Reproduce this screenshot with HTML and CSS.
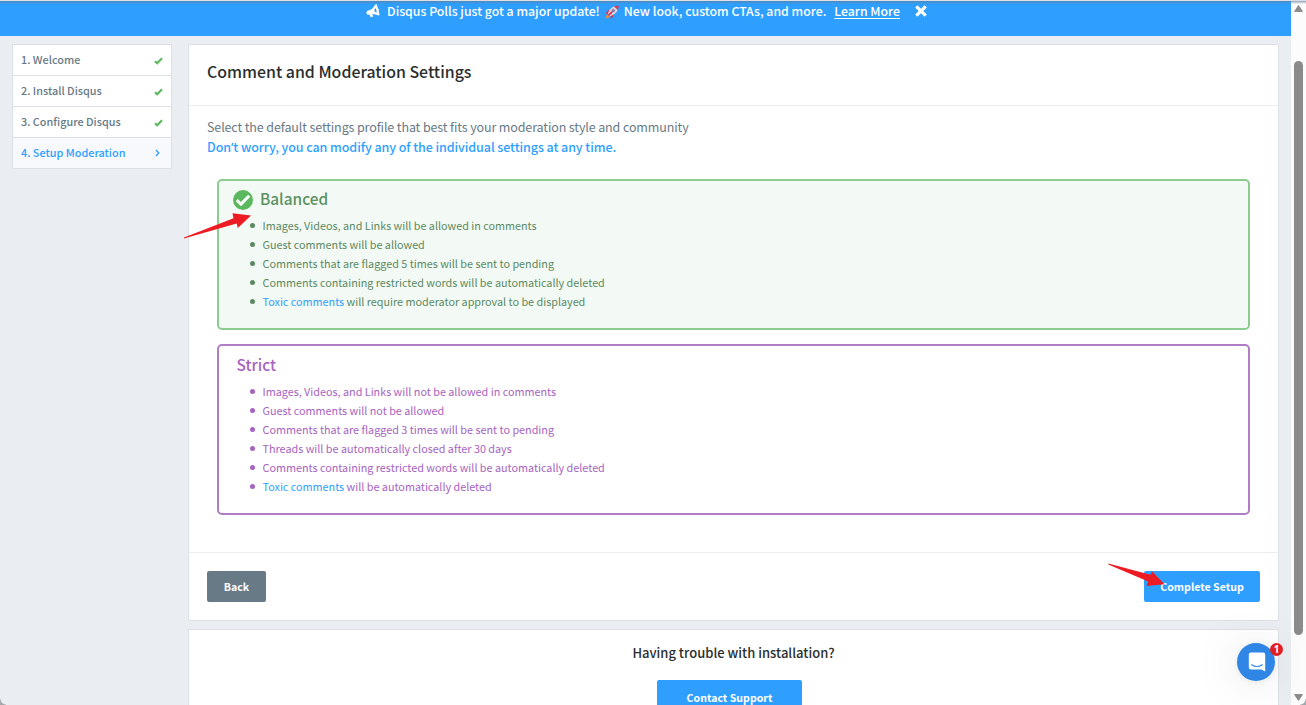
FILE: index.html
```html
<!DOCTYPE html>
<html lang="en">
<head>
<meta charset="utf-8">
<title>Comment and Moderation Settings</title>
<link rel="stylesheet" href="styles.css">
</head>
<body>
<div class="window">
  <div class="page">
    <div class="banner">
      <svg class="horn" viewBox="0 0 14 14"><path fill="#fff" fill-rule="evenodd" d="M9.6.3 10.9.6 11.8 4.2 13 5.4 12.7 6.9 13.6 10.9 12.7 11.6 8.6 10.2 6.1 10.3 7.4 12.6 4.7 13.3 3.3 10.6 1.6 10.7Q.2 10 .3 8.3L1.2 7 6 5ZM9.7 3.9 8.3 5.8 8.9 7.9 10.9 8.6Z"/></svg>
      <span class="banner-text">Disqus Polls just got a major update!</span>
      <svg class="rocket" viewBox="0 0 14 14"><path fill="#d9304f" d="M4 4.8 1.2 7.5.8 9.3 4 8ZM9 9.5 7.2 12.7 5.5 13.5 6 10Z"/><path fill="#f58a32" d="M.5 13.5Q.8 10.2 3 9.5L4.8 11.2Q3.8 13.1.5 13.5Z"/><path fill="#d9d5df" d="M2.8 9.3Q4 3.7 9 1.2L12.9 5Q10.2 9.8 4.8 11.2Z"/><path fill="#e03a59" d="M9 1.2Q11.1.3 13.6.4 13.7 3 12.9 5Z"/><circle cx="8.2" cy="5.7" r="1.6" fill="#8b72a0"/><path stroke="#d9304f" stroke-width="1.8" d="M3.4 10.4 7 7"/></svg>
      <span class="banner-text">New look, custom CTAs, and more.</span>
      <a class="learn">Learn More</a>
      <svg class="close" viewBox="0 0 12 12"><path stroke="#fff" stroke-width="3.2" d="M1.3 1.3 10.7 10.7M10.7 1.3 1.3 10.7"/></svg>
    </div>
    <div class="layout">
      <nav class="steps">
        <div class="step"><span>1. Welcome</span><svg class="tick" viewBox="0 0 9 8"><path d="M1 4.2 3.2 6.2 8 1.3"/></svg></div>
        <div class="step"><span>2. Install Disqus</span><svg class="tick" viewBox="0 0 9 8"><path d="M1 4.2 3.2 6.2 8 1.3"/></svg></div>
        <div class="step"><span>3. Configure Disqus</span><svg class="tick" viewBox="0 0 9 8"><path d="M1 4.2 3.2 6.2 8 1.3"/></svg></div>
        <div class="step current"><span>4. Setup Moderation</span><svg class="chevron" viewBox="0 0 5 8"><path d="M1 1 3.8 4 1 7"/></svg></div>
      </nav>
      <main class="content">
        <section class="card settings">
          <header class="card-head"><h1>Comment and Moderation Settings</h1></header>
          <div class="card-body">
            <p class="intro">Select the default settings profile that best fits your moderation style and community</p>
            <p class="hint">Don<span class="apostrophe">’</span>t worry, you can modify any of the individual settings at any time.</p>
            <div class="option balanced">
              <h2><svg class="selected" viewBox="0 0 20 20"><circle cx="10" cy="10" r="10" fill="#5cb85f"/><path fill="none" stroke="#fff" stroke-width="3" d="M3.8 10.2 8 14.1 16.2 5.8"/></svg><span>Balanced</span></h2>
              <ul>
                <li>Images, Videos, and Links will be allowed in comments</li>
                <li>Guest comments will be allowed</li>
                <li>Comments that are flagged 5 times will be sent to pending</li>
                <li>Comments containing restricted words will be automatically deleted</li>
                <li><a>Toxic comments</a> will require moderator approval to be displayed</li>
              </ul>
            </div>
            <div class="option strict">
              <h2><span>Strict</span></h2>
              <ul>
                <li>Images, Videos, and Links will not be allowed in comments</li>
                <li>Guest comments will not be allowed</li>
                <li>Comments that are flagged 3 times will be sent to pending</li>
                <li>Threads will be automatically closed after 30 days</li>
                <li>Comments containing restricted words will be automatically deleted</li>
                <li><a>Toxic comments</a> will be automatically deleted</li>
              </ul>
            </div>
          </div>
          <footer class="card-foot">
            <button class="btn back">Back</button>
            <button class="btn complete">Complete Setup</button>
          </footer>
        </section>
        <section class="card help">
          <h3>Having trouble with installation?</h3>
          <button class="btn contact">Contact Support</button>
        </section>
      </main>
    </div>
  </div>
  <div class="scrollbar">
    <svg class="up" viewBox="0 0 9 7"><path d="M4.5.6 8.4 6.4H.6Z"/></svg>
    <div class="thumb"></div>
    <svg class="down" viewBox="0 0 9 7"><path d="M4.5 6.4.6.6H8.4Z"/></svg>
  </div>
  <svg class="pointer pointer-a" viewBox="0 0 68 28"><path fill="#ed1c24" d="M0 25.5 49.5 6.3 48.5 1.2 67 3.4 53.8 16 52.7 11.5 0 26.5Z"/></svg>
  <svg class="pointer pointer-b" viewBox="0 0 58 26"><path fill="#ed1c24" d="M.3.6 42.5 11.7 44 8.3 56.5 21.3 38.5 23 40.2 18.5.3 1.4Z"/></svg>
  <div class="chat">
    <svg viewBox="0 0 18 20"><path fill="#fff" d="M3 .5H15Q17.2.5 17.2 2.7V19.5L13.4 17.5H3Q.8 17.5.8 15.3V2.7Q.8.5 3 .5Z"/><path fill="none" stroke="#2f86e5" stroke-width="1.1" stroke-linecap="round" d="M3.7 12.7Q9 16.3 14.3 12.7"/></svg>
    <span class="badge">1</span>
  </div>
  <div class="window-edge"></div>
  <div class="corner corner-left"></div>
  <div class="corner corner-right"></div>
</div>
</body>
</html>
```
FILE: styles.css
```css
* { box-sizing: border-box; }
body, h1, h2, h3, p, ul { margin: 0; padding: 0; }
body {
  font-family: "Noto Sans CJK SC", "Noto Sans", sans-serif;
  background: #eaedf2;
  overflow: hidden;
}
svg { display: block; flex: none; }
.window { position: relative; display: flex; width: 1306px; height: 705px; overflow: hidden; }
.page { flex: 1; min-width: 0; }
.banner {
  height: 36px;
  padding: 1px 0 0 2px;
  background: #2e9fff;
  color: #fff;
  display: flex;
  justify-content: center;
  align-items: flex-start;
  font-size: 12.3px;
  font-weight: 500;
  line-height: 20px;
  white-space: nowrap;
}
.horn { width: 14px; height: 14px; margin: 3px 7px 0 0; }
.rocket { width: 14px; height: 14px; margin: 4px 5px 0 5px; }
.learn { margin-left: 8px; text-decoration: underline; text-underline-offset: 2px; }
.close { width: 12px; height: 12px; margin: 4px 0 0 15px; }
.layout { display: flex; align-items: flex-start; gap: 16px; padding: 8px 12px 0; }
.steps { width: 160px; border: 1px solid #dbdfe8; }
.step {
  height: 31px;
  padding: 0 8px;
  display: flex;
  align-items: flex-start;
  justify-content: space-between;
  background: #fff;
  border-bottom: 1px solid #dbdfe8;
  font-size: 10.85px;
  font-weight: 500;
  line-height: 28px;
  color: #687a86;
}
.step:last-child { border-bottom: 0; height: 30px; }
.current { color: #2e9fff; background: #f8f9fd; }
.tick { width: 9px; height: 8px; margin-top: 12px; }
.tick path { fill: none; stroke: #5cb85f; stroke-width: 2.2; }
.chevron { width: 5px; height: 8px; margin: 11px 3px 0 0; }
.chevron path { fill: none; stroke: #2e9fff; stroke-width: 1.3; }
.content { flex: 1; display: flex; flex-direction: column; gap: 8px; }
.card { background: #fff; border: 1px solid #dbdfe8; border-radius: 2px; }
.settings { height: 577px; display: flex; flex-direction: column; }
.card-head { height: 61px; padding: 0 18px; border-bottom: 1px solid #eaedf2; }
.card-head h1 { font-size: 15.9px; font-weight: 500; line-height: 54px; color: #2a2e2e; }
.card-body { flex: 1; padding: 11px 18px 0; }
.intro, .hint { font-size: 12.5px; line-height: 20px; letter-spacing: -.12px; color: #687a86; }
.hint { font-weight: 500; letter-spacing: -.08px; color: #2e9fff; }
.apostrophe { font-family: "Open Sans", sans-serif; font-weight: 600; line-height: 1; }
.option { margin: 0 10px; border: 2px solid; border-radius: 5px; }
.option h2 { display: flex; height: 24px; align-items: center; font-size: 15.4px; font-weight: 500; line-height: 24px; }
.option h2 span { margin-top: -2px; }
.option ul { margin-top: 5px; padding-left: 43.5px; font-size: 10.8px; line-height: 19px; list-style: none; }
.option li { position: relative; }
.option li::before { content: ""; position: absolute; left: -12.5px; top: 7px; width: 5px; height: 5px; border-radius: 50%; background: currentColor; }
.option a { color: #2e9fff; }
.balanced { margin-top: 22px; height: 151px; padding: 6px 0 0; border-color: #8ccc90; background: #f3f9f4; color: #5b8a62; }
.balanced h2 { padding-left: 14px; color: #5c9160; }
.selected { width: 20px; height: 20px; margin: 2px 7px 0 0; }
.strict { margin-top: 14px; height: 171px; padding: 7px 0 0; border-color: #b07cc6; color: #a763bf; }
.strict h2 { padding-left: 17.5px; }
.card-foot { height: 68px; padding: 18px; border-top: 1px solid #eaedf2; display: flex; justify-content: space-between; }
.btn { height: 31px; padding: 0; border: 0; border-radius: 2px; background: #2e9fff; color: #fff; font-family: inherit; font-size: 10.6px; font-weight: 700; line-height: 31px; }
.back { width: 59px; background: #687a86; }
.complete { width: 116px; }
.help { height: 120px; display: flex; flex-direction: column; align-items: center; padding-top: 13px; }
.help h3 { font-size: 13px; font-weight: 500; line-height: 20px; color: #2a2e2e; }
.contact { width: 145px; height: 35px; margin: 17px 8px 0 0; line-height: 35px; }
.scrollbar { width: 15px; background: #fcfcfc; display: flex; flex-direction: column; align-items: center; padding: 5px 0 4px; }
.scrollbar svg { width: 9px; height: 7px; }
.scrollbar path { fill: #8b8b8b; stroke: #8b8b8b; stroke-width: 1; stroke-linejoin: round; }
.thumb { width: 9px; height: 574px; margin-top: 49px; border-radius: 5px; background: #8b8b8b; }
.down { margin-top: auto; }
.pointer { position: absolute; }
.pointer-a { left: 184px; top: 212px; width: 68px; height: 28px; }
.pointer-b { left: 1108px; top: 563px; width: 58px; height: 26px; }
.chat {
  position: absolute; left: 1237px; top: 643px; width: 38px; height: 38px;
  border-radius: 50%; background: #2f86e5; display: flex; align-items: center; justify-content: center;
  box-shadow: 0 1px 6px rgba(0,0,0,.08), 0 2px 50px rgba(0,0,0,.12);
}
.chat svg { width: 18px; height: 20px; margin-left: 1px; }
.badge {
  position: absolute; left: 33px; top: 0; width: 13px; height: 13px; border-radius: 50%;
  background: #df1f22; color: #fff; font: 700 10px/13px "Open Sans", sans-serif; text-align: center;
}
.window-edge { position: absolute; inset: 0 0 auto; height: 4px; background: linear-gradient(#d9e0e8 0 1px, rgba(100,125,150,.7) 1px, rgba(70,110,150,0)); }
.corner { position: absolute; bottom: 0; width: 6px; height: 6px; }
.corner-left { left: 0; background: radial-gradient(circle at 100% 0, transparent 5px, #a5a8ab 6px); }
.corner-right { right: 0; background: radial-gradient(circle at 0 0, transparent 5px, #a5a8ab 6px); }
```
